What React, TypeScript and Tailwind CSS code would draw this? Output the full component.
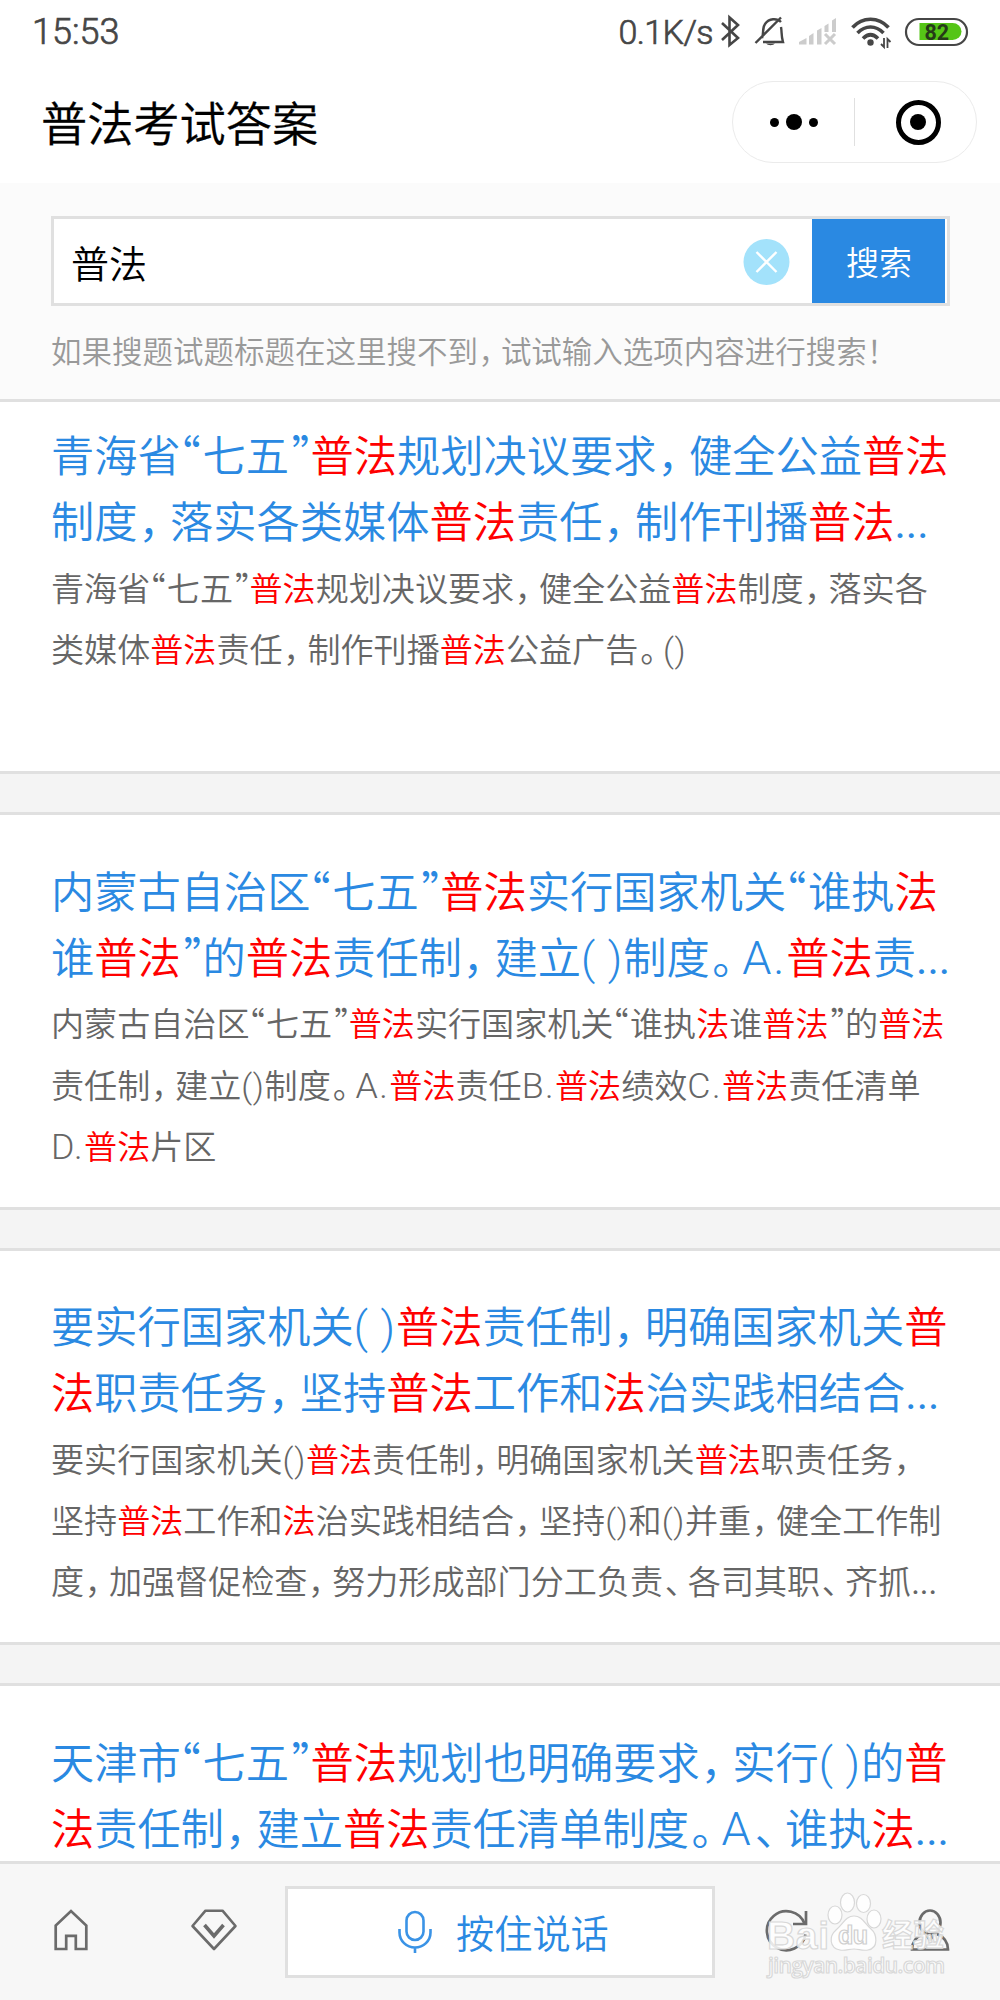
import type { ReactElement, ReactNode } from 'react'

interface SearchResult {
  id: number
  title: string[]
  body: string[]
}

const results: SearchResult[] = [
  {
    id: 1,
    title: [
      '青海省“七五”普法规划决议要求，健全公益普法',
      '制度，落实各类媒体普法责任，制作刊播普法...',
    ],
    body: [
      '青海省“七五”普法规划决议要求，健全公益普法制度，落实各',
      '类媒体普法责任，制作刊播普法公益广告。()',
    ],
  },
  {
    id: 2,
    title: [
      '内蒙古自治区“七五”普法实行国家机关“谁执法',
      '谁普法”的普法责任制，建立( )制度。A.普法责...',
    ],
    body: [
      '内蒙古自治区“七五”普法实行国家机关“谁执法谁普法”的普法',
      '责任制，建立()制度。A.普法责任B.普法绩效C.普法责任清单',
      'D.普法片区',
    ],
  },
  {
    id: 3,
    title: [
      '要实行国家机关( )普法责任制，明确国家机关普',
      '法职责任务，坚持普法工作和法治实践相结合...',
    ],
    body: [
      '要实行国家机关()普法责任制，明确国家机关普法职责任务，',
      '坚持普法工作和法治实践相结合，坚持()和()并重，健全工作制',
      '度，加强督促检查，努力形成部门分工负责、各司其职、齐抓...',
    ],
  },
  {
    id: 4,
    title: [
      '天津市“七五”普法规划也明确要求，实行( )的普',
      '法责任制，建立普法责任清单制度。A、谁执法...',
    ],
    body: [],
  },
]

const TOKEN = /([普法]+|[，。、“”]|\.\.\.|[A-Z]\.?|\( ?\))/

// Narrow punctuation widths, in em, so that the lines set tighter than full width
const punctuation: Record<string, string> = {
  '，': 'w-[0.75em] indent-[0.02em]',
  '、': 'w-[0.75em] indent-[0.05em]',
  '。': 'w-[0.75em] indent-[0.06em]',
  '“': 'w-[0.5em] indent-[-0.04em]',
  '”': 'w-[0.5em] indent-[0.06em]',
}

function renderToken(token: string, index: number): ReactNode {
  if (/^[普法]/.test(token)) {
    return (
      <span key={index} className="text-[#ff0000]">
        {token}
      </span>
    )
  }
  if (punctuation[token]) {
    return (
      <span
        key={index}
        className={`inline-block leading-none whitespace-nowrap [font-feature-settings:'halt'] ${punctuation[token]}`}
      >
        {token}
      </span>
    )
  }
  if (token === '...') {
    return (
      <span key={index} className="font-['Roboto'] font-normal leading-none">
        {token}
      </span>
    )
  }
  if (/^[A-Z]/.test(token)) {
    return (
      <span
        key={index}
        className="font-['Roboto'] text-[1.08em] leading-none tracking-[0.04em]"
      >
        {token}
      </span>
    )
  }
  if (token.startsWith('(')) {
    return (
      <span
        key={index}
        className="font-['Roboto'] text-[1.03em] leading-none font-light tracking-[0.02em]"
      >
        {token}
      </span>
    )
  }
  return token
}

function Line({ text, className }: { text: string; className: string }): ReactElement {
  return (
    <p className={`whitespace-nowrap ${className}`}>
      {text.split(TOKEN).filter(Boolean).map(renderToken)}
    </p>
  )
}

function ResultCard({ result, first }: { result: SearchResult; first: boolean }): ReactElement {
  return (
    <article
      className={
        first
          ? 'h-[372px] shrink-0 border-b-3 border-[#e0e0e0] bg-white pt-[18px] pl-[51px]'
          : 'mt-[38px] h-[397.5px] shrink-0 border-y-3 border-[#e0e0e0] bg-white pt-[40.5px] pl-[51px]'
      }
    >
      {result.title.map((line) => (
        <Line
          key={line}
          text={line}
          className="h-[66.2px] text-[43.25px] leading-[66.2px] text-[#2a89e2]"
        />
      ))}
      <div className="mt-[4.5px]">
        {result.body.map((line) => (
          <Line
            key={line}
            text={line}
            className="h-[61.2px] text-[33.1px] leading-[61.2px] text-[#666666]"
          />
        ))}
      </div>
    </article>
  )
}

function StatusBar(): ReactElement {
  return (
    <div className="flex h-16 items-center justify-between pr-[22px] pl-[32px] text-[#464646]">
      <span className="font-['Roboto'] text-[36px] font-light [-webkit-text-stroke:0.7px]">
        15:53
      </span>
      <div className="flex items-center">
        <span className="mr-[5px] font-['Roboto'] text-[34px] font-light tracking-[-0.6px] [-webkit-text-stroke:0.7px]">
          0.1K/s
        </span>
        <svg className="h-10 w-[260px]" viewBox="718 11 260 40" fill="none" stroke="#464646">
          {/* bluetooth */}
          <path d="M722 22l16 15-8.500 7V16.500l8.500 7.500-16 15" strokeWidth="2.600" />
          {/* muted bell */}
          <path d="M762 37c2-5 0-10 3-14 4-6 12-6 16-2M781 26c1 5 0 8 2 15h-20M755.5 42L781 16.500" strokeWidth="2.4" />
          <path d="M766 42.500a5 3 0 0 0 9 0z" fill="#464646" stroke="none" />
          {/* cellular */}
          <g fill="#cccccc" stroke="none">
            <path d="M799 43.500v-2.500l7.500-4v6.500z" />
            <path d="M809 43.500v-8.500l4.500-3v11.500zM817 43.500v-14l4.500-2.500v16.500zM824.500 31v-6l4-2.500v8.500zM832 31v-11.500l4-2.500v14z" />
          </g>
          <path d="M825 33l10 10M835 33l-10 10" stroke="#cccccc" strokeWidth="3" />
          {/* wifi */}
          <path d="M852.500 26.500c10-11 26-11 36 0M857.500 32c8-8 18-8 26 0M863 37.500c5-5 10-5 15 0" strokeWidth="3.600" />
          <circle cx="870.500" cy="41.500" r="3.200" fill="#464646" stroke="none" />
          <path d="M884 37v9l-3-3M887.500 47v-9l3 3" strokeWidth="1.800" />
          {/* battery */}
          <rect x="906" y="18" width="61" height="26" rx="13" strokeWidth="2.200" />
          <path d="M919.500 22h33a9 8.500 0 0 1 0 17h-33z" fill="#55c516" stroke="none" />
          <text
            x="924.500"
            y="38.500"
            className="font-['Roboto'] text-[21.500px] font-bold"
            fill="#263a18"
            stroke="none"
          >
            82
          </text>
        </svg>
      </div>
    </div>
  )
}

function TitleBar(): ReactElement {
  return (
    <div className="flex h-[119px] items-start justify-between pr-[23px] pl-[41px]">
      <h1 className="mt-[22px] text-[46.2px] leading-[70px] text-black [-webkit-text-stroke:0.3px]">
        普法考试答案
      </h1>
      <div className="mt-[17px] flex h-[82px] w-[245px] items-center rounded-full border border-[#ebebeb]">
        <div className="flex w-[121px] items-center justify-center gap-[7px]">
          <span className="size-[9px] rounded-full bg-black" />
          <span className="size-4 rounded-full bg-black" />
          <span className="size-[9px] rounded-full bg-black" />
        </div>
        <span className="h-12 w-px bg-[#e0e0e0]" />
        <div className="flex flex-1 justify-center pl-[5px]">
          <span className="flex size-[45px] items-center justify-center rounded-full border-[5.5px] border-black">
            <span className="size-4 rounded-full bg-black" />
          </span>
        </div>
      </div>
    </div>
  )
}

function SearchPanel(): ReactElement {
  return (
    <section className="h-[219px] shrink-0 border-b-3 border-[#e0e0e0] bg-[#fbfbfb] px-[51px] pt-[33px]">
      <div className="flex h-[90px] w-[899px] items-stretch border-3 border-[#e0e0e0] bg-white pr-[2px]">
        <span className="flex-1 pt-[3px] pl-[17px] text-[38px] leading-[80px] text-black">
          普法
        </span>
        <svg className="mt-[20px] mr-[22px] size-[47px]" viewBox="0 0 47 47">
          <circle cx="23.500" cy="23" r="23" fill="#a3e2fb" />
          <path d="M13.500 13l20 20M33.500 13l-20 20" stroke="#fff" strokeWidth="2.400" />
        </svg>
        <button className="w-[133px] bg-[#2a89e2] pl-[1px] text-[33px] leading-[84px] text-white">
          搜索
        </button>
      </div>
      <Line
        text="如果搜题试题标题在这里搜不到，试试输入选项内容进行搜索！"
        className="mt-[14px] text-[30.5px] leading-[60px] text-[#999999]"
      />
    </section>
  )
}

function BottomBar(): ReactElement {
  return (
    <footer className="flex h-[139px] shrink-0 items-center border-t-3 border-[#e0e0e0] bg-[#f7f7f7]">
      <div className="flex flex-1 justify-center">
        <svg className="mb-1 size-12" viewBox="0 0 48 48" fill="none" stroke="#6b6b6b" strokeWidth="2.700">
          <path d="M8.700 43V19.500L24 5l15.300 14.500V43H28.800V29.800h-9.600V43z" />
        </svg>
      </div>
      <div className="flex flex-1 justify-center">
        <svg className="mb-1 size-12" viewBox="0 0 48 48" fill="none" stroke="#6b6b6b" strokeWidth="2.600" strokeLinejoin="round">
          <path d="M15.500 4.700h17L45.500 20 24 43 2.500 20z" />
          <path d="M14.500 19l9.500 11 9.500-11" strokeWidth="3.600" strokeLinejoin="miter" />
        </svg>
      </div>
      <button className="flex h-[92px] w-[430px] items-center border-3 border-[#e0e0e0] bg-white text-[38.2px] text-[#2a89e2]">
        <svg className="ml-[107px] h-[44px] w-[40px]" viewBox="0 0 40 44" fill="none" stroke="#3a93e6" strokeWidth="2.600">
          <rect x="11.500" y="2" width="17" height="28" rx="8.500" />
          <path d="M4.500 19v3.500a15.500 15 0 0 0 31 0V19M20 37.500V43" />
        </svg>
        <span className="ml-[21px] leading-[60px]">按住说话</span>
      </button>
      <div className="flex flex-1 justify-center">
        <svg className="mb-1 size-12" viewBox="0 0 48 48" fill="none" stroke="#6b6b6b" strokeWidth="2.700">
          <path d="M43.500 28.500a19.500 19.500 0 1 1-1-11" />
          <path d="M44 5v13H31" />
        </svg>
      </div>
      <div className="flex flex-1 justify-center">
        <svg className="mb-1 size-12" viewBox="0 0 48 48" fill="none" stroke="#6b6b6b" strokeWidth="2.700">
          <ellipse cx="25" cy="16.500" rx="10.500" ry="12" />
          <path d="M18 28C11 31 7 36 7 43.500h36c0-7.500-4-12.500-11-15.500M21 29l4 5 4-5" />
        </svg>
      </div>
    </footer>
  )
}

function Watermark(): ReactElement {
  return (
    <svg
      className="absolute right-[50px] bottom-[16px] h-[96px] w-[190px]"
      viewBox="760 1888 190 96"
      fill="#ffffff"
      fillOpacity="0.85"
      stroke="#d8d8d8"
      strokeWidth="1.200"
    >
      <ellipse cx="835" cy="1915" rx="7" ry="9" />
      <ellipse cx="847.500" cy="1902.500" rx="7" ry="9.500" />
      <ellipse cx="863.500" cy="1903.500" rx="7" ry="9" />
      <ellipse cx="874" cy="1919" rx="7" ry="9" />
      <path d="M854 1916c8 0 11 8 17 13s8 19-3 21c-6 1-9-1-14-1s-9 2-14 1c-11-2-11-14-4-20s10-14 18-14z" />
      <text x="767" y="1948.500" className="font-['Liberation_Sans'] text-[39px] font-bold" textLength="62">
        Bai
      </text>
      <text x="838" y="1944" className="font-['Liberation_Sans'] text-[25px] font-bold" textLength="30" stroke="#cfcfcf">
        du
      </text>
      <text x="882" y="1946" className="text-[31px] font-bold">
        经验
      </text>
      <text x="768" y="1973" className="font-['Open_Sans'] text-[21px] font-semibold" textLength="177">
        jingyan.baidu.com
      </text>
    </svg>
  )
}

export default function App(): ReactElement {
  return (
    <div className="relative flex h-[2000px] w-[1000px] flex-col overflow-hidden bg-white font-['Noto_Sans_CJK_SC',sans-serif] font-[350] [text-spacing-trim:space-all]">
      <header className="h-[183px] shrink-0">
        <StatusBar />
        <TitleBar />
      </header>
      <SearchPanel />
      <main className="flex min-h-0 flex-1 flex-col overflow-hidden bg-[#f4f4f4]">
        {results.map((result, index) => (
          <ResultCard key={result.id} result={result} first={index === 0} />
        ))}
      </main>
      <BottomBar />
      <Watermark />
    </div>
  )
}
